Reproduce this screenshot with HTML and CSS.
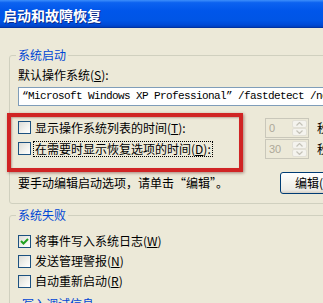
FILE: index.html
```html
<!DOCTYPE html>
<html lang="zh-CN">
<head>
  <meta charset="UTF-8">
  <title>启动和故障恢复</title>
  <link rel="stylesheet" href="styles.css">
</head>
<body>
  <div class="window">
    <div class="titlebar">启动和故障恢复</div>
    <div class="client">
      <fieldset class="group group-startup">
        <legend>系统启动</legend>
        <div class="field-label">默认操作系统(<u>S</u>):</div>
        <div class="combo">“Microsoft Windows XP Professional” /fastdetect /noexecute=optin</div>

        <div class="timeouts">
          <div class="row">
            <span class="check"></span>
            <span class="row-label"><span class="text">显示操作系统列表的时间(<u>T</u>):</span></span>
            <span class="spin">
              <span class="spin-value">0</span>
              <span class="spin-btns">
                <span class="spin-btn"><svg width="7" height="4" viewBox="0 0 7 4"><path d="M0.5 3.5 L3.5 0.5 L6.5 3.5" fill="none" stroke="#c4c2b8" stroke-width="1.2"/></svg></span>
                <span class="spin-btn"><svg width="7" height="4" viewBox="0 0 7 4"><path d="M0.5 0.5 L3.5 3.5 L6.5 0.5" fill="none" stroke="#c4c2b8" stroke-width="1.2"/></svg></span>
              </span>
            </span>
            <span class="unit">秒</span>
          </div>
          <div class="row">
            <span class="check"></span>
            <span class="row-label"><span class="text focused">在需要时显示恢复选项的时间(<u>D</u>):</span></span>
            <span class="spin">
              <span class="spin-value">30</span>
              <span class="spin-btns">
                <span class="spin-btn"><svg width="7" height="4" viewBox="0 0 7 4"><path d="M0.5 3.5 L3.5 0.5 L6.5 3.5" fill="none" stroke="#c4c2b8" stroke-width="1.2"/></svg></span>
                <span class="spin-btn"><svg width="7" height="4" viewBox="0 0 7 4"><path d="M0.5 0.5 L3.5 3.5 L6.5 0.5" fill="none" stroke="#c4c2b8" stroke-width="1.2"/></svg></span>
              </span>
            </span>
            <span class="unit">秒</span>
          </div>
          <!-- red annotation frame drawn over the two rows -->
          <div class="highlight"></div>
        </div>

        <div class="edit-row">
          <span class="edit-text">要手动编辑启动选项，请单击“编辑”。</span>
          <button class="btn">编辑(<u>E</u>)</button>
        </div>
      </fieldset>

      <fieldset class="group group-failure">
        <legend>系统失败</legend>
        <div class="checks">
          <div class="row">
            <span class="check checked">
              <svg width="11" height="11" viewBox="0 0 11 11"><path d="M2 5 L4.5 7.5 L9 3" fill="none" stroke="#21a121" stroke-width="2"/></svg>
            </span>
            <span class="text">将事件写入系统日志(<u>W</u>)</span>
          </div>
          <div class="row">
            <span class="check"></span>
            <span class="text">发送管理警报(<u>N</u>)</span>
          </div>
          <div class="row">
            <span class="check"></span>
            <span class="text">自动重新启动(<u>R</u>)</span>
          </div>
        </div>
        <fieldset class="group group-debug">
          <legend>写入调试信息</legend>
        </fieldset>
      </fieldset>
    </div>
  </div>
</body>
</html>
```

FILE: styles.css
```css
html, body {
  margin: 0;
  padding: 0;
  overflow: hidden;
  background-color: #ece9d8;
}

.window {
  width: 420px;
  height: 303px;
  font-family: "Noto Sans CJK SC", "DejaVu Sans", sans-serif;
  font-size: 12px;
  line-height: 14px;
  color: #000;
  background-color: #ece9d8;
}

.titlebar {
  height: 28px;
  box-sizing: border-box;
  padding: 4px 0 0 3px;
  line-height: 23px;
  font-size: 14px;
  font-weight: bold;
  color: #fff;
  text-shadow: 1px 1px 0 #0a2a8a;
  background: linear-gradient(to bottom, #3d8ffb 0%, #0c62f0 10%, #0056ea 40%, #0055e6 75%, #004ad6 92%, #003fbc 100%);
  border-bottom: 1px solid #0032a4;
}

.client {
  padding-top: 20px;
}

.group {
  margin: 0 0 0 9px;
  padding: 0 0 0 8px;
  border: 1px solid #d0d0bf;
  border-radius: 3px;
  min-width: 0;
  width: 390px;
}

.group legend {
  padding: 0 2px;
  margin-left: -2px;
  color: #0046d5;
  font-size: 12px;
  line-height: 14px;
}

.group-startup {
  padding-bottom: 9px;
}

.field-label {
  margin-top: 6px;
}

.combo {
  margin-top: 5px;
  height: 19px;
  box-sizing: border-box;
  padding: 0 0 0 3px;
  border: 1px solid #7f9db9;
  background-color: #fff;
  font-family: "Liberation Mono", monospace;
  font-size: 11px;
  letter-spacing: -0.6px;
  line-height: 17px;
  white-space: nowrap;
  overflow: hidden;
}

.timeouts {
  position: relative;
  margin-top: 11px;
}

.row {
  display: flex;
  align-items: center;
  height: 21px;
}

.check {
  flex: 0 0 13px;
  width: 13px;
  height: 13px;
  box-sizing: border-box;
  border: 1px solid #1c5180;
  background: linear-gradient(135deg, #dcdcd7 0%, #f3f3ef 60%, #ffffff 100%);
  display: flex;
  align-items: center;
  justify-content: center;
}

.row-label {
  flex: 0 0 232px;
  margin-left: 2px;
}

.text {
  display: inline-block;
  border: 1px dotted transparent;
  padding: 0 1px;
  line-height: 14px;
}

.text.focused {
  border-color: #000;
}

.spin {
  display: flex;
  width: 44px;
  height: 20px;
  box-sizing: border-box;
  border: 1px solid #c9c7ba;
  background-color: #ece9d8;
}

.spin-value {
  flex: 1;
  padding-left: 3px;
  line-height: 18px;
  color: #aca899;
  font-family: "Liberation Sans", sans-serif;
  font-size: 11px;
}

.spin-btns {
  display: flex;
  flex-direction: column;
  width: 15px;
  padding: 1px;
}

.spin-btn {
  flex: 1;
  display: flex;
  align-items: center;
  justify-content: center;
  border: 1px solid #e2e0d6;
  border-radius: 2px;
  background-color: #f4f3ee;
}

.unit {
  margin-left: 8px;
}

.highlight {
  position: absolute;
  left: -11px;
  top: -4px;
  width: 236px;
  height: 59px;
  box-sizing: border-box;
  border: 4px solid #d02424;
  box-shadow: 1px 1px 3px rgba(80, 0, 0, 0.45), inset 1px 1px 2px rgba(80, 0, 0, 0.3);
  pointer-events: none;
}

.edit-row {
  display: flex;
  align-items: center;
  margin-top: 13px;
  height: 22px;
}

.edit-text {
  flex: 0 0 262px;
}

.btn {
  height: 22px;
  padding: 0 14px;
  font-family: inherit;
  font-size: 12px;
  line-height: 18px;
  color: #000;
  border: 1px solid #003c74;
  border-radius: 3px;
  background: linear-gradient(to bottom, #ffffff 0%, #f4f3ee 50%, #ecebe6 85%, #d6d0c5 100%);
}

.group-failure {
  margin-top: 4px;
}

.checks {
  margin-top: 9px;
}

.checks .row {
  height: 20px;
}

.checks .text {
  margin-left: 2px;
}

.group-debug {
  margin: 6px 0 0 0;
  padding-left: 3px;
  width: 360px;
  height: 40px;
}
```
